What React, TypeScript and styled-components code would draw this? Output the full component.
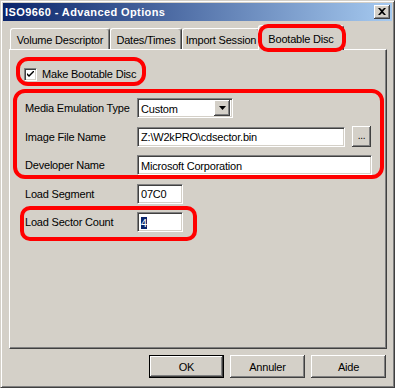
import React from "react";
import styled, { createGlobalStyle } from "styled-components";

const Global = createGlobalStyle`
  html, body { margin: 0; padding: 0; background: #d4d0c8; }
  body { font-family: "Liberation Sans", Arial, sans-serif; }
`;

const Window = styled.div`
  width: 395px;
  height: 388px;
  box-sizing: border-box;
  background: #d4d0c8;
  border: 1px solid;
  border-color: #d4d0c8 #404040 #404040 #d4d0c8;
  box-shadow: inset 1px 1px 0 #fff, inset -1px -1px 0 #808080;
  padding: 2px;
  display: flex;
  flex-direction: column;
  font-family: "Liberation Sans", Arial, sans-serif;
  font-size: 11px;
  letter-spacing: -0.2px;
  color: #000;
  overflow: hidden;
`;

const TitleBar = styled.div`
  height: 18px;
  display: flex;
  align-items: center;
  justify-content: space-between;
  padding: 0 2px 0 2px;
  background: linear-gradient(to right, #0a246a, #a6caf0);
`;

const TitleText = styled.span`
  color: #fff;
  font-weight: bold;
  font-size: 11px;
  letter-spacing: 0.4px;
`;

const CloseButton = styled.div`
  width: 16px;
  height: 14px;
  box-sizing: border-box;
  background: #d4d0c8;
  box-shadow: inset -1px -1px 0 #404040, inset 1px 1px 0 #fff,
    inset -2px -2px 0 #808080;
  display: flex;
  align-items: center;
  justify-content: center;
  padding-right: 1px;
  padding-bottom: 1px;
`;

const Body = styled.div`
  display: flex;
  flex-direction: column;
  padding: 4px 5px 0 6px;
`;

const TabStrip = styled.div`
  display: flex;
  align-items: flex-end;
  height: 24px;
  padding-left: 1px;
  position: relative;
  z-index: 1;
`;

const Tab = styled.div<{ $w: number; $active?: boolean }>`
  position: relative;
  box-sizing: border-box;
  width: ${(p) => p.$w}px;
  height: ${(p) => (p.$active ? 25 : 21)}px;
  margin: ${(p) => (p.$active ? "0 -2px -1px -2px" : "0")};
  z-index: ${(p) => (p.$active ? 2 : 1)};
  background: #d4d0c8;
  border-top: 1px solid #fff;
  border-left: 1px solid #fff;
  border-right: 1px solid #404040;
  border-radius: 3px 3px 0 0;
  box-shadow: inset -1px 0 0 #808080;
  display: flex;
  align-items: ${(p) => (p.$active ? "flex-start" : "center")};
  justify-content: center;
  padding-top: ${(p) => (p.$active ? 7 : 2)}px;
  white-space: nowrap;
`;

const Panel = styled.div`
  box-sizing: border-box;
  height: 300px;
  background: #d4d0c8;
  border: 1px solid;
  border-color: #fff #404040 #404040 #fff;
  box-shadow: inset -1px -1px 0 #808080;
  padding: 17px 0 0 15px;
  display: flex;
  flex-direction: column;
  align-items: flex-start;
`;

const Highlight = styled.div<{ $t: number; $r: number; $b: number; $l: number; $radius?: number }>`
  position: relative;
  display: flex;
  flex-direction: column;
  gap: 8.5px;
  &::after {
    content: "";
    position: absolute;
    top: ${(p) => -p.$t}px;
    right: ${(p) => -p.$r}px;
    bottom: ${(p) => -p.$b}px;
    left: ${(p) => -p.$l}px;
    border: 4px solid #ff0000;
    border-radius: ${(p) => p.$radius ?? 12}px;
    pointer-events: none;
    z-index: 5;
  }
`;

const CheckRow = styled.div`
  display: flex;
  align-items: center;
  gap: 5px;
  height: 14px;
  margin-left: -1px;
`;

const CheckBox = styled.div`
  width: 13px;
  height: 13px;
  box-sizing: border-box;
  background: #fff;
  border: 1px solid;
  border-color: #808080 #fff #fff #808080;
  box-shadow: inset 1px 1px 0 #404040, inset -1px -1px 0 #d4d0c8;
  display: flex;
  align-items: center;
  justify-content: center;
`;

const Fields = styled.div`
  display: flex;
  flex-direction: column;
  align-items: flex-start;
  gap: 8.5px;
  margin-top: 17px;
`;

const Row = styled.div`
  display: flex;
  align-items: center;
  height: 20px;
`;

const Label = styled.span`
  width: 112px;
  flex: none;
  white-space: nowrap;
`;

const Field = styled.div<{ $w: number }>`
  width: ${(p) => p.$w}px;
  height: 20px;
  box-sizing: border-box;
  background: #fff;
  border: 1px solid;
  border-color: #808080 #fff #fff #808080;
  box-shadow: inset 1px 1px 0 #404040, inset -1px -1px 0 #d4d0c8;
  display: flex;
  align-items: center;
  padding: 1px 0 0 3px;
  white-space: nowrap;
  overflow: hidden;
`;

const ComboField = styled(Field)`
  padding-right: 2px;
  justify-content: space-between;
`;

const DropButton = styled.div`
  width: 16px;
  height: 16px;
  box-sizing: border-box;
  background: #d4d0c8;
  box-shadow: inset -1px -1px 0 #404040, inset 1px 1px 0 #fff,
    inset -2px -2px 0 #808080;
  display: flex;
  align-items: center;
  justify-content: center;
  margin-top: -1px;
`;

const Selected = styled.span`
  background: #0a246a;
  color: #fff;
`;

const BrowseButton = styled.div`
  width: 19px;
  height: 21px;
  margin-left: 7px;
  box-sizing: border-box;
  background: #d4d0c8;
  box-shadow: inset -1px -1px 0 #404040, inset 1px 1px 0 #fff,
    inset -2px -2px 0 #808080;
  display: flex;
  align-items: center;
  justify-content: center;
  padding-bottom: 2px;
  font-size: 10px;
`;

const ButtonRow = styled.div`
  display: flex;
  justify-content: flex-end;
  gap: 6px;
  margin-top: 6px;
  padding-right: 1px;
`;

const Button = styled.div<{ $default?: boolean }>`
  width: 75px;
  height: 23px;
  box-sizing: border-box;
  background: #d4d0c8;
  border: ${(p) => (p.$default ? "1px solid #000" : "none")};
  box-shadow: inset -1px -1px 0 #404040, inset 1px 1px 0 #fff,
    inset -2px -2px 0 #808080;
  display: flex;
  align-items: center;
  justify-content: center;
`;

export default function App() {
  return (
    <>
      <Global />
      <Window>
        <TitleBar>
          <TitleText>ISO9660 - Advanced Options</TitleText>
          <CloseButton>
            <svg width="8" height="7" viewBox="0 0 8 7">
              <path d="M0 0h2l2 2 2-2h2L5 3.5 8 7H6L4 5 2 7H0l3-3.5z" fill="#000" />
            </svg>
          </CloseButton>
        </TitleBar>
        <Body>
          <TabStrip>
            <Tab $w={100}>Volume Descriptor</Tab>
            <Tab $w={72}>Dates/Times</Tab>
            <Tab $w={78}>Import Session</Tab>
            <Highlight $t={1} $r={4} $b={3} $l={2} $radius={10}>
              <Tab $w={86} $active>
                Bootable Disc
              </Tab>
            </Highlight>
          </TabStrip>
          <Panel>
            <Highlight $t={10} $r={10} $b={5} $l={9}>
              <CheckRow>
                <CheckBox>
                  <svg width="7" height="7" viewBox="0 0 7 7">
                    <path d="M0 2v2l2 2 5-5V-1L2 4z" fill="#000" />
                  </svg>
                </CheckBox>
                <span>Make Bootable Disc</span>
              </CheckRow>
            </Highlight>
            <Fields>
              <Highlight $t={9} $r={12} $b={4} $l={12}>
                <Row>
                  <Label>Media Emulation Type</Label>
                  <ComboField $w={96}>
                    <span>Custom</span>
                    <DropButton>
                      <svg width="7" height="4" viewBox="0 0 7 4">
                        <path d="M0 0h7L3.5 4z" fill="#000" />
                      </svg>
                    </DropButton>
                  </ComboField>
                </Row>
                <Row>
                  <Label>Image File Name</Label>
                  <Field $w={208}>Z:\W2kPRO\cdsector.bin</Field>
                  <BrowseButton>...</BrowseButton>
                </Row>
                <Row>
                  <Label>Developer Name</Label>
                  <Field $w={235}>Microsoft Corporation</Field>
                </Row>
              </Highlight>
              <Row>
                <Label>Load Segment</Label>
                <Field $w={46}>07C0</Field>
              </Row>
              <Highlight $t={6} $r={14} $b={9} $l={5} $radius={10}>
                <Row>
                  <Label>Load Sector Count</Label>
                  <Field $w={46}>
                    <Selected>4</Selected>
                  </Field>
                </Row>
              </Highlight>
            </Fields>
          </Panel>
          <ButtonRow>
            <Button $default>OK</Button>
            <Button>Annuler</Button>
            <Button>Aide</Button>
          </ButtonRow>
        </Body>
      </Window>
    </>
  );
}
